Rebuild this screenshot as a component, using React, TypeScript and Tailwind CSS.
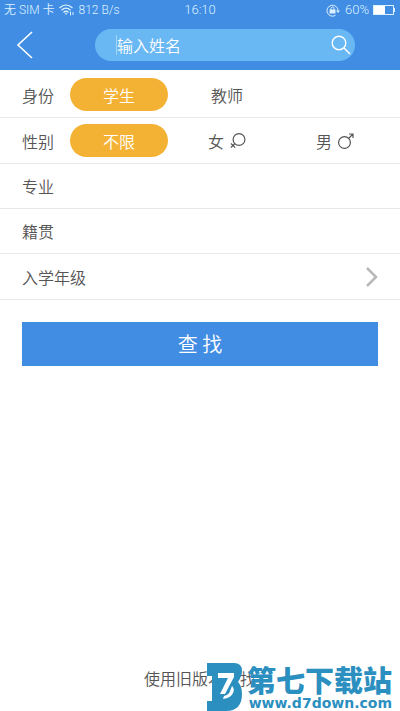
import type { ReactNode } from "react";

function StatusBar() {
  return (
    <div className="grid h-5 grid-cols-3 items-center px-1 font-['Roboto','Noto_Sans_CJK_SC',sans-serif] text-[13px] leading-5 text-[#dcf1ff]">
      <div className="flex items-center gap-1 text-xs leading-5 whitespace-nowrap">
        <span>无 SIM 卡</span>
        <svg width="16" height="12" viewBox="0 0 16 12" fill="none" stroke="currentColor" strokeWidth="1.3" aria-hidden="true">
          <path d="M.5 4C4.500.2 9.500.2 13.500 4" />
          <path d="M2.500 6.200C5.300 3.600 8.700 3.600 11.500 6.200" />
          <path d="M4.500 8.400C6.200 6.900 7.800 6.900 9.500 8.400" />
          <path d="M5.500 9.200 7 11 8.500 9.200Z" fill="currentColor" stroke="none" />
          <path d="M11.500 7.500v4M14 8v3" strokeWidth="1" />
        </svg>
        <span>812 B/s</span>
      </div>
      <span className="text-center">16:10</span>
      <div className="flex items-center justify-end gap-1">
        <svg width="15" height="13" viewBox="0 0 15 13" fill="none" stroke="currentColor" aria-hidden="true">
          <path d="M9.500 11.300A5.500 5.500 0 1 1 12 6.500" />
          <path d="M10 6.500h4L12 9Z" fill="currentColor" stroke="none" />
          <path d="M3.500 5.500h6v4h-6Z" fill="currentColor" stroke="none" />
          <path d="M5 6V4.500a1.500 1.500 0 0 1 3 0V6" />
        </svg>
        <span>60%</span>
        <svg width="23" height="10" viewBox="0 0 23 10" fill="none" aria-hidden="true">
          <rect x=".5" y=".5" width="20" height="9" stroke="currentColor" />
          <rect x="1" y="1" width="11" height="8" fill="#fff" />
          <path d="M21.500 3v4" stroke="currentColor" />
        </svg>
      </div>
    </div>
  );
}

function Header() {
  return (
    <header className="h-[70px] bg-[#418de4]">
      <StatusBar />
      <div className="flex h-[50px] items-center pr-[45px] pl-4">
        <button type="button" aria-label="返回" className="mr-[61px] shrink-0 text-white">
          <svg width="18" height="28" viewBox="0 0 18 28" fill="none" stroke="currentColor" strokeWidth="1.6" aria-hidden="true">
            <path d="M16 1 2 14 16 27" />
          </svg>
        </button>
        <form role="search" className="flex h-8 flex-1 items-center rounded-full bg-[#6ab8f3] pr-1 pl-[21px]">
          <span className="h-5 w-px shrink-0 bg-[#a3d6fa]" />
          <input
            type="text"
            aria-label="姓名"
            placeholder="输入姓名"
            className="min-w-0 flex-1 bg-transparent text-base text-white outline-none placeholder:text-white"
          />
          <button type="submit" aria-label="搜索" className="text-white">
            <svg width="20" height="20" viewBox="0 0 20 20" fill="none" stroke="currentColor" strokeWidth="1.4" aria-hidden="true">
              <circle cx="8" cy="8" r="6.800" />
              <path d="m13 13 6 6" />
            </svg>
          </button>
        </form>
      </div>
    </header>
  );
}

function FemaleIcon() {
  return (
    <svg width="16" height="16" viewBox="0 0 16 16" fill="none" stroke="currentColor" strokeWidth="1.2" aria-hidden="true">
      <circle cx="9" cy="6.500" r="5.900" />
      <path d="M5 10.500.8 14.700M1 10.500l4.200 4.200" />
    </svg>
  );
}

function MaleIcon() {
  return (
    <svg width="16" height="16" viewBox="0 0 16 16" fill="none" stroke="currentColor" strokeWidth="1.2" aria-hidden="true">
      <circle cx="6.500" cy="9.500" r="5.900" />
      <path d="M10.500 5.500 15 1M11 1h4v4" />
    </svg>
  );
}

interface OptionProps {
  name: string;
  value: string;
  icon?: ReactNode;
  defaultChecked?: boolean;
}

function Option({ name, value, icon, defaultChecked }: OptionProps) {
  return (
    <label className="mx-[5px] flex h-[33px] flex-1 cursor-pointer items-center justify-center gap-1.5 rounded-full has-checked:bg-[#f4b234] has-checked:text-white">
      <input type="radio" name={name} value={value} defaultChecked={defaultChecked} className="-mr-1.5 size-0 appearance-none" />
      {value}
      {icon}
    </label>
  );
}

function OptionRow({ title, children }: { title: string; children: ReactNode }) {
  return (
    <div role="radiogroup" aria-label={title} className="flex h-[46px] items-center border-b border-[#e8e8e8] pr-[11px] pl-[22px]">
      <span className="w-[43px] shrink-0">{title}</span>
      {children}
    </div>
  );
}

function FieldRow({ title }: { title: string }) {
  return (
    <label className="flex h-[45px] items-center border-b border-[#e8e8e8] px-[22px]">
      <span className="shrink-0">{title}</span>
      <input type="text" className="ml-4 min-w-0 flex-1 bg-transparent outline-none" />
    </label>
  );
}

function Watermark() {
  return (
    <div className="pointer-events-none absolute right-2 bottom-0 flex items-start gap-1 text-[#2b8fc0]">
      <svg width="37" height="48" viewBox="0 0 37 48" aria-hidden="true">
        <path fill="currentColor" d="M1 0H28Q36 0 36 8Q36 13 32 19Q36 23 36 31Q36 48 20 48H1V38H6V13H1Z" />
        <path fill="#fff" d="M12 10H28V14L19 31H14L22 15H12Z" />
        <path fill="#fff" d="M26 23Q29 26 27 30Q25 35 17 36L18 33Q23 32 24 28Z" />
      </svg>
      <div className="flex flex-col">
        <span className="text-[29px] leading-[33px] font-black">第七下载站</span>
        <span className="self-end font-['DejaVu_Sans',sans-serif] text-sm leading-[15px] font-bold">www.d7down.com</span>
      </div>
    </div>
  );
}

export default function App() {
  return (
    <div className="relative flex min-h-screen flex-col bg-white font-['Noto_Sans_CJK_SC',sans-serif] text-base leading-[22px] font-[350] text-[#555]">
      <Header />
      <main className="flex flex-1 flex-col pt-0.5">
        <OptionRow title="身份">
          <Option name="role" value="学生" defaultChecked />
          <Option name="role" value="教师" />
          <span className="mx-[5px] flex-1" />
        </OptionRow>
        <OptionRow title="性别">
          <Option name="gender" value="不限" defaultChecked />
          <Option name="gender" value="女" icon={<FemaleIcon />} />
          <Option name="gender" value="男" icon={<MaleIcon />} />
        </OptionRow>
        <FieldRow title="专业" />
        <FieldRow title="籍贯" />
        <button type="button" className="flex h-[46px] items-center justify-between border-b border-[#e8e8e8] px-[22px]">
          入学年级
          <svg width="12" height="20" viewBox="0 0 12 20" fill="none" stroke="#b8b8b8" strokeWidth="2.500" aria-hidden="true">
            <path d="m1 1 9 9-9 9" />
          </svg>
        </button>
        <button type="submit" className="mx-[22px] mt-[22px] h-11 bg-[#418de4] text-xl text-white">
          查 找
        </button>
        <a href="#legacy" className="mt-auto mb-[22px] self-center">
          使用旧版本查找
        </a>
      </main>
      <Watermark />
    </div>
  );
}
